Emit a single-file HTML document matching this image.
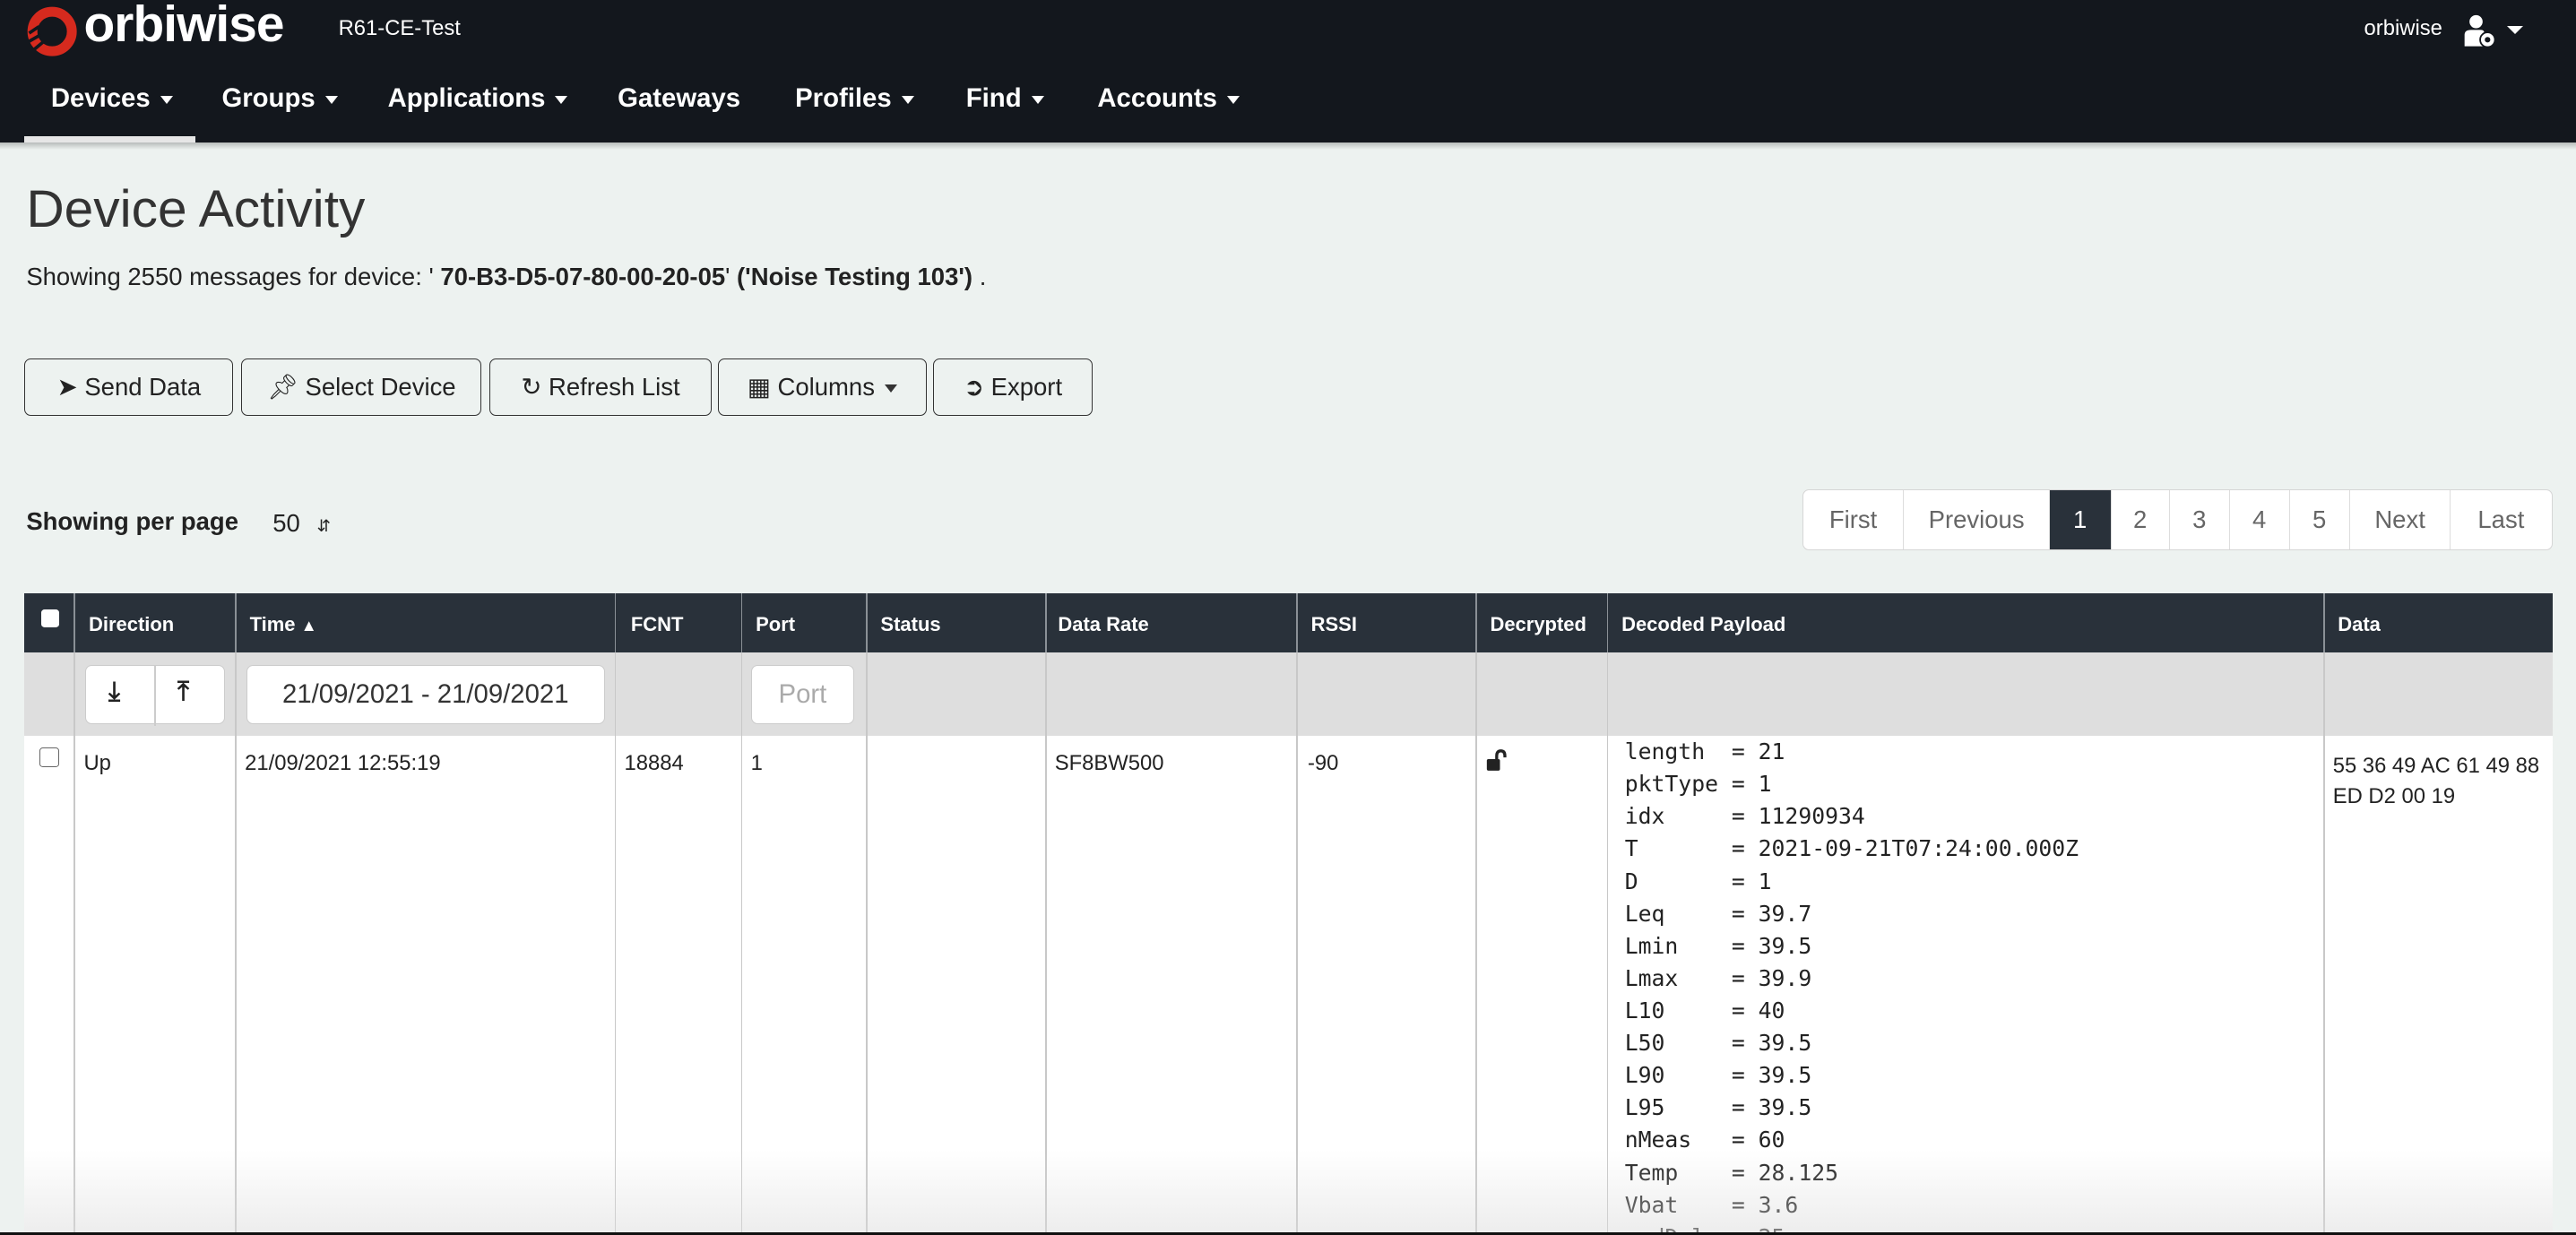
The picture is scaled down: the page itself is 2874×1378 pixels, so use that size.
<!DOCTYPE html>
<html><head><meta charset="utf-8"><style>
html,body{margin:0;padding:0;overflow:hidden;height:1378px;}
body{width:1568px;height:752px;zoom:1.83291;overflow:hidden;background:#edf2f0;font-family:"Liberation Sans",sans-serif;color:#222;position:relative}
.hdr{position:absolute;left:0;top:0;width:1568px;height:87px;background:#13171d;color:#fff}
.abs{position:absolute;white-space:nowrap}
.nav span{position:absolute;top:51px;font-size:16px;font-weight:bold;color:#fff}
.car{display:inline-block;width:0;height:0;border-left:4px solid transparent;border-right:4px solid transparent;border-top:5px solid #fff;vertical-align:middle;margin-left:6px}
.btn{position:absolute;top:218px;height:34px;border:1px solid #333;border-radius:4px;font-size:15px;line-height:34px;text-align:center;box-sizing:content-box;background:transparent}
.pg{position:absolute;top:298px;height:36px;border:1px solid #d6d6d6;border-radius:4px;background:#fff;display:flex;overflow:hidden}
.pg div{border-left:1px solid #ddd;font-size:15px;line-height:36px;color:#666;text-align:center}
.th{position:absolute;top:361px;left:15px;width:1539px;height:36px;background:#29313a}
.th span{position:absolute;top:12px;font-size:12px;font-weight:bold;color:#fff}
.fr{position:absolute;top:397px;left:15px;width:1539px;height:51px;background:#dedede}
.row{position:absolute;top:448px;left:15px;width:1539px;height:302px;background:#fff;overflow:hidden}
.vl{position:absolute;width:1px;background:#c8c8c8}
.cell{position:absolute;font-size:13px;color:#222}
pre{margin:0;font-family:"DejaVu Sans Mono","Liberation Mono",monospace;font-size:13.5px;line-height:19.7px;color:#222;white-space:pre!important}
</style></head><body>
<div class="hdr">
 <svg class="abs" style="left:15px;top:2px" width="34" height="34" viewBox="0 0 34 34"><circle cx="17" cy="17" r="12" fill="none" stroke="#d62a1e" stroke-width="6"/><path d="M3 18 L9 14 M3 23 L10 19 M6 28 L12 23" stroke="#13171d" stroke-width="2"/></svg>
 <div class="abs" style="left:51px;top:-3px;font-size:31px;font-weight:bold;letter-spacing:-0.5px">orbiwise</div>
 <div class="abs" style="left:206px;top:10px;font-size:13px">R61-CE-Test</div>
 <div class="abs" style="left:1439px;top:10px;font-size:13px">orbiwise</div>
 <svg class="abs" style="left:1498px;top:8px" width="22" height="22" viewBox="0 0 22 22"><circle cx="9" cy="5" r="4" fill="#fff"/><path d="M2 20 V13 Q2 10 6 10 H12 Q14 10 14 12 V20Z" fill="#fff"/><circle cx="16" cy="16" r="4.5" fill="#fff" stroke="#13171d" stroke-width="1"/><circle cx="16" cy="16" r="1.7" fill="#13171d"/></svg>
 <div class="abs" style="left:1526px;top:16px;border-left:5px solid transparent;border-right:5px solid transparent;border-top:5px solid #fff"></div>
 <div class="nav">
  <span style="left:31px">Devices<i class="car"></i></span>
  <span style="left:135px">Groups<i class="car"></i></span>
  <span style="left:236px">Applications<i class="car"></i></span>
  <span style="left:376px">Gateways</span>
  <span style="left:484px">Profiles<i class="car"></i></span>
  <span style="left:588px">Find<i class="car"></i></span>
  <span style="left:668px">Accounts<i class="car"></i></span>
 </div>
 <div class="abs" style="left:15px;top:83px;width:104px;height:4px;background:#e6e6e6"></div>
</div>
<div class="abs" style="left:0;top:87px;width:1568px;height:4px;background:linear-gradient(#b8bcbb,#edf2f0)"></div>
<div class="abs" style="left:16px;top:109px;font-size:32px;color:#333">Device Activity</div>
<div class="abs" style="left:16px;top:160px;font-size:15px">Showing 2550 messages for device: ' <b>70-B3-D5-07-80-00-20-05</b>' <b>('Noise Testing 103')</b> .</div>

<div class="btn" style="left:15px;width:126px">&#10148; Send Data</div>
<div class="btn" style="left:147px;width:145px">&#128204;&#xFE0E; Select Device</div>
<div class="btn" style="left:298px;width:134px">&#8635; Refresh List</div>
<div class="btn" style="left:437px;width:126px">&#9638; Columns<i class="car" style="border-top-color:#333"></i></div>
<div class="btn" style="left:568px;width:96px">&#10162; Export</div>

<div class="abs" style="left:16px;top:309px;font-size:15px;font-weight:bold">Showing per page</div>
<div class="abs" style="left:166px;top:310px;font-size:15px">50 <span style="font-size:10px;margin-left:6px">&#8693;</span></div>

<div class="pg" style="left:1097px;width:456px">
 <div style="width:61px;border-left:none">First</div>
 <div style="width:88px">Previous</div>
 <div style="width:37px;background:#29313a;color:#fff">1</div>
 <div style="width:35px">2</div>
 <div style="width:36px">3</div>
 <div style="width:36px">4</div>
 <div style="width:36px">5</div>
 <div style="width:61px">Next</div>
 <div style="width:61px">Last</div>
</div>

<div class="th">
 <div class="abs" style="left:10px;top:10px;width:11px;height:11px;background:#fff;border-radius:2px"></div>
 <span style="left:39px">Direction</span><span style="left:137px">Time <small>&#9650;</small></span><span style="left:369px">FCNT</span><span style="left:445px">Port</span><span style="left:521px">Status</span><span style="left:629px">Data Rate</span><span style="left:783px">RSSI</span><span style="left:892px">Decrypted</span><span style="left:972px">Decoded Payload</span><span style="left:1408px">Data</span>
</div>
<div class="fr">
 <div class="abs" style="left:37px;top:8px;width:84px;height:35px;background:#fff;border:1px solid #ccc;border-radius:4px"></div>
 <div class="abs" style="left:79px;top:8px;width:1px;height:37px;background:#ccc"></div>
 <div class="abs" style="left:51px;top:15px;font-size:16px;font-weight:bold">&#10515;</div>
 <div class="abs" style="left:93px;top:15px;font-size:16px;font-weight:bold">&#10514;</div>
 <div class="abs" style="left:135px;top:8px;width:217px;height:35px;background:#fff;border:1px solid #ccc;border-radius:4px;font-size:16px;line-height:35px;text-align:center;color:#333">21/09/2021 - 21/09/2021</div>
 <div class="abs" style="left:442px;top:8px;width:62px;height:35px;background:#fff;border:1px solid #ccc;border-radius:4px;font-size:16px;line-height:35px;text-align:center;color:#aaa">Port</div>
</div>
<div class="row">
 <div class="abs" style="left:9px;top:7px;width:11px;height:11px;border:1px solid #666;border-radius:2px;background:#fff"></div>
 <div class="cell" style="left:36px;top:9px">Up</div>
 <div class="cell" style="left:134px;top:9px">21/09/2021 12:55:19</div>
 <div class="cell" style="left:365px;top:9px">18884</div>
 <div class="cell" style="left:442px;top:9px">1</div>
 <div class="cell" style="left:627px;top:9px">SF8BW500</div>
 <div class="cell" style="left:781px;top:9px">-90</div>
 <svg class="abs" style="left:889px;top:8px" width="14" height="14" viewBox="0 0 14 14"><rect x="1" y="6" width="8" height="7" rx="1" fill="#222"/><path d="M7 6 V4 Q7 1 9.5 1 Q12 1 12 4 V5" fill="none" stroke="#222" stroke-width="1.8"/></svg>
 <pre style="position:absolute;left:974px;top:0px">length  = 21
pktType = 1
idx     = 11290934
T       = 2021-09-21T07:24:00.000Z
D       = 1
Leq     = 39.7
Lmin    = 39.5
Lmax    = 39.9
L10     = 40
L50     = 39.5
L90     = 39.5
L95     = 39.5
nMeas   = 60
Temp    = 28.125
Vbat    = 3.6
rndDel  = 25</pre>
 <div class="cell" style="left:1405px;top:9px;line-height:18.5px">55 36 49 AC 61 49 88<br>ED D2 00 19</div>
</div>
<div class="vl" style="left:45px;top:397px;height:353px"></div>
<div class="vl" style="left:143px;top:397px;height:353px"></div>
<div class="vl" style="left:374px;top:397px;height:353px"></div>
<div class="vl" style="left:451px;top:397px;height:353px"></div>
<div class="vl" style="left:527px;top:397px;height:353px"></div>
<div class="vl" style="left:636px;top:397px;height:353px"></div>
<div class="vl" style="left:789px;top:397px;height:353px"></div>
<div class="vl" style="left:898px;top:397px;height:353px"></div>
<div class="vl" style="left:978px;top:397px;height:353px"></div>
<div class="vl" style="left:1414px;top:397px;height:353px"></div>
<div class="vl" style="left:45px;top:361px;height:36px;background:#8a9096"></div>
<div class="vl" style="left:143px;top:361px;height:36px;background:#8a9096"></div>
<div class="vl" style="left:374px;top:361px;height:36px;background:#8a9096"></div>
<div class="vl" style="left:451px;top:361px;height:36px;background:#8a9096"></div>
<div class="vl" style="left:527px;top:361px;height:36px;background:#8a9096"></div>
<div class="vl" style="left:636px;top:361px;height:36px;background:#8a9096"></div>
<div class="vl" style="left:789px;top:361px;height:36px;background:#8a9096"></div>
<div class="vl" style="left:898px;top:361px;height:36px;background:#8a9096"></div>
<div class="vl" style="left:978px;top:361px;height:36px;background:#8a9096"></div>
<div class="vl" style="left:1414px;top:361px;height:36px;background:#8a9096"></div>
<div class="abs" style="left:15px;top:700px;width:1539px;height:50px;background:linear-gradient(rgba(220,220,220,0),rgba(220,220,220,0.5))"></div>
<div class="abs" style="left:0;top:750px;width:1568px;height:2px;background:#111"></div>
</body></html>
